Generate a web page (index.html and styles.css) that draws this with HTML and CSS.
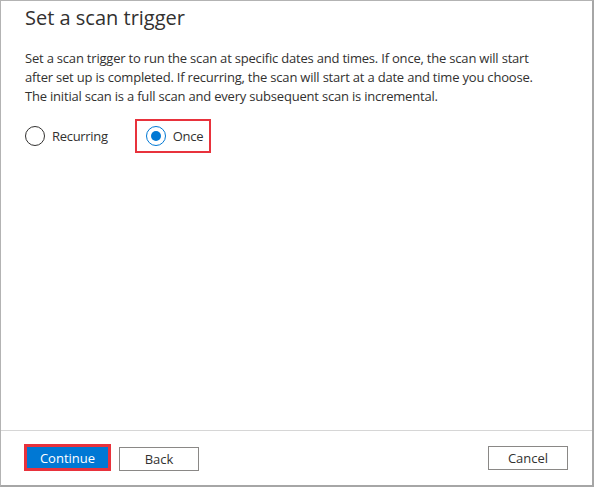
FILE: index.html
```html
<!DOCTYPE html>
<html>
<head>
<meta charset="utf-8">
<link rel="stylesheet" href="styles.css">
</head>
<body>
<div class="pane">
  <div class="content">
    <h1 class="title">Set a scan trigger</h1>
    <p class="desc">Set a scan trigger to run the scan at specific dates and times. If once, the scan will start<br>after set up is completed. If recurring, the scan will start at a date and time you choose.<br>The initial scan is a full scan and every subsequent scan is incremental.</p>
    <div class="radios">
      <label class="radio">
        <span class="circle"></span>
        <span class="radio-label">Recurring</span>
      </label>
      <label class="radio radio-selected highlight">
        <span class="circle checked"><span class="dot"></span></span>
        <span class="radio-label">Once</span>
      </label>
    </div>
  </div>
  <div class="footer">
    <div class="left-actions">
      <div class="highlight-btn"><button class="btn btn-primary">Continue</button></div>
      <button class="btn btn-default">Back</button>
    </div>
    <button class="btn btn-default">Cancel</button>
  </div>
</div>
</body>
</html>
```
FILE: styles.css
```css
* { box-sizing: border-box; }
html, body { margin: 0; padding: 0; background: #fff; }
body {
  font-family: "Open Sans", "Noto Sans", sans-serif;
  color: #323130;
}
.pane {
  width: 594px;
  height: 487px;
  border-top: 1px solid #b3b3b3;
  border-left: 1px solid #b3b3b3;
  border-right: 2px solid #a6a6a6;
  border-bottom: 2px solid #a6a6a6;
  display: flex;
  flex-direction: column;
}
.content {
  flex: 1;
  padding: 0 24px 0 24px;
}
.title {
  margin: 0;
  padding-top: 3px;
  font-size: 20px;
  line-height: 28px;
  font-weight: 400;
  color: #323130;
}
.desc {
  margin: 17px 0 0 0;
  font-size: 13px;
  line-height: 19px;
  letter-spacing: -0.2px;
  color: #323130;
}
.radios {
  display: flex;
  align-items: center;
  margin-top: 13px;
}
.radio {
  display: flex;
  align-items: center;
  font-size: 13px;
  letter-spacing: -0.3px;
  padding: 0;
  margin-right: 27px;
}
.highlight {
  border: 2px solid #e8323c;
  padding: 5px 6px 5px 9px;
  margin-right: 0;
}
.circle {
  width: 20px;
  height: 20px;
  border-radius: 50%;
  border: 1px solid #323130;
  display: flex;
  align-items: center;
  justify-content: center;
  margin-right: 7px;
}
.circle.checked { border-color: #0078d4; }
.dot {
  width: 10px;
  height: 10px;
  border-radius: 50%;
  background: #0078d4;
}
.radio-label { line-height: 19px; }
.footer {
  border-top: 1px solid #d6d6d6;
  padding: 13px 24px 0 23px;
  height: 55px;
  display: flex;
  justify-content: space-between;
  align-items: flex-start;
}
.left-actions {
  display: flex;
  align-items: center;
  gap: 8px;
}
.highlight-btn {
  border: 3px solid #e8323c;
}
.btn {
  font-family: "Open Sans", "Noto Sans", sans-serif;
  font-size: 13px;
  height: 24px;
  width: 80px;
  padding: 0;
  margin: 0;
  line-height: 20px;
  cursor: pointer;
}
.btn-primary {
  display: block;
  width: 81px;
  height: 21px;
  background: #0078d4;
  color: #fff;
  border: none;
}
.btn-default {
  background: #fff;
  color: #323130;
  border: 1px solid #8a8886;
  margin-top: 2px;
}
```
